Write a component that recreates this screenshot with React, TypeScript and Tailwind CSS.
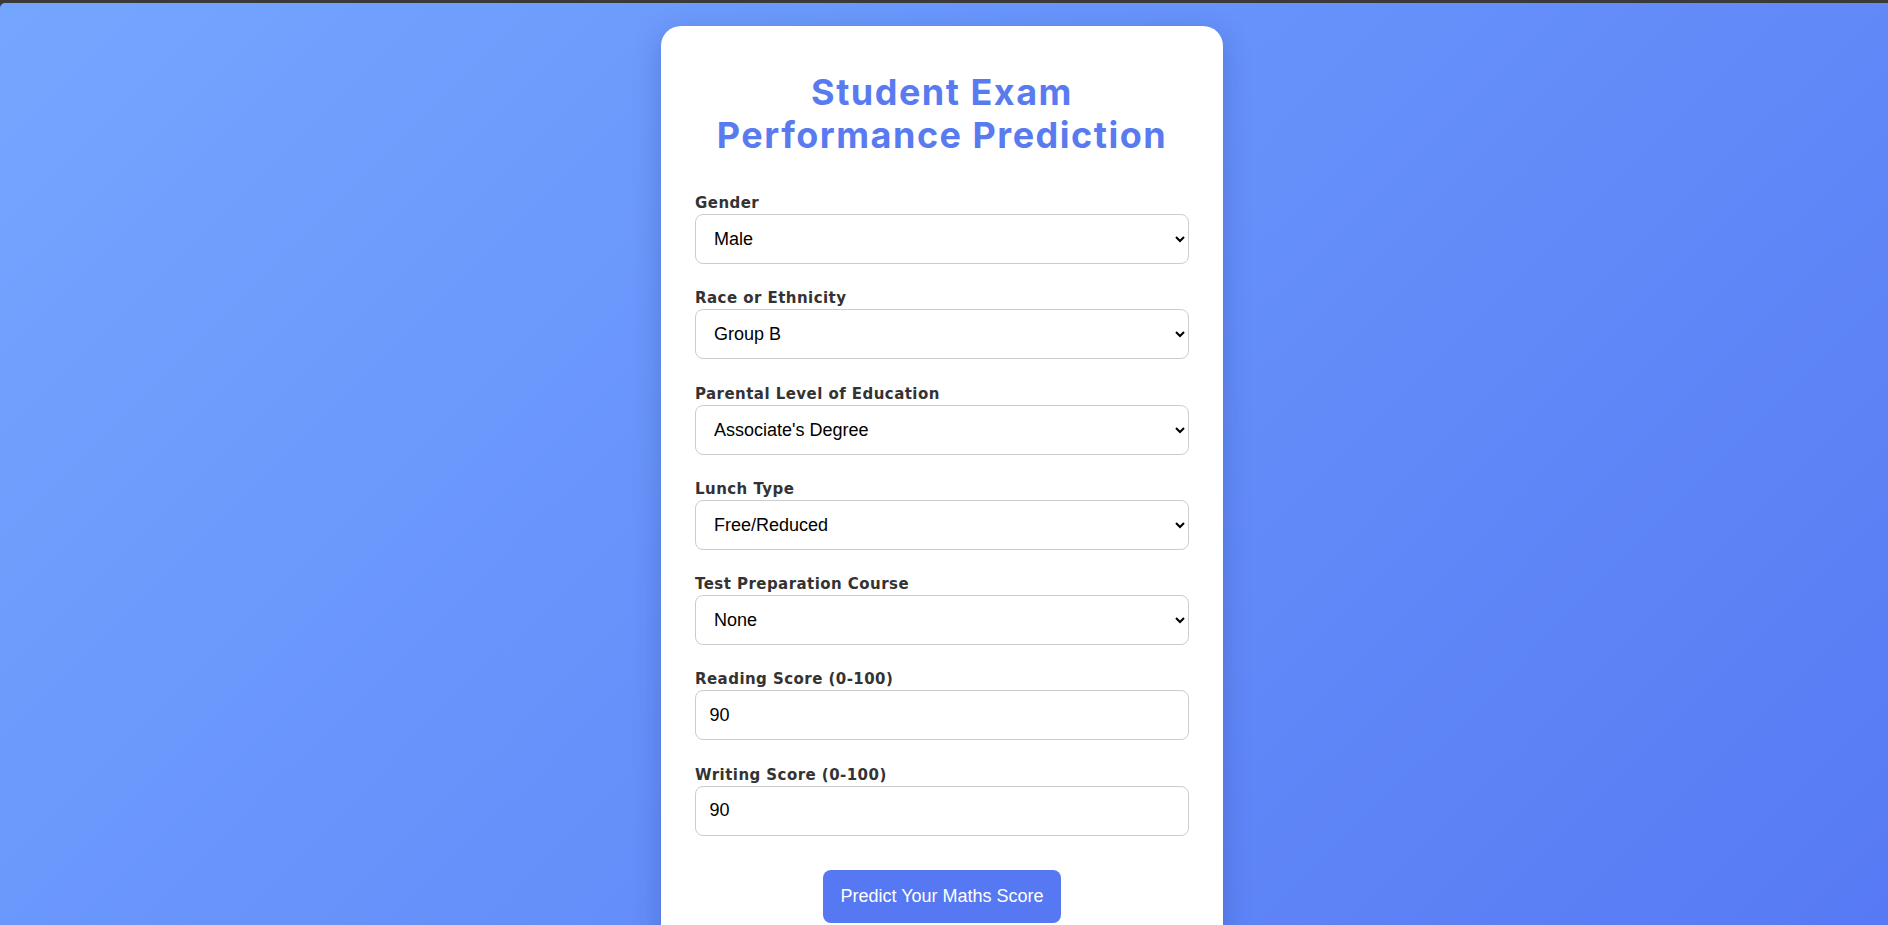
import React from "react";

const fields: { label: string; type: "select" | "input"; value: string }[] = [
  { label: "Gender", type: "select", value: "Male" },
  { label: "Race or Ethnicity", type: "select", value: "Group B" },
  { label: "Parental Level of Education", type: "select", value: "Associate's Degree" },
  { label: "Lunch Type", type: "select", value: "Free/Reduced" },
  { label: "Test Preparation Course", type: "select", value: "None" },
  { label: "Reading Score (0-100)", type: "input", value: "90" },
  { label: "Writing Score (0-100)", type: "input", value: "90" },
];

export default function App() {
  return (
    <div className="h-screen w-full overflow-hidden bg-[#3a3a3a] pt-[3px]">
      <div className="h-full w-full overflow-hidden rounded-tl-[5px] bg-[linear-gradient(135deg,#74a6ff_0%,#577af4_100%)] flex justify-center pr-[4px]">
        <div className="mt-[23px] w-[562px] shrink-0 self-start rounded-[20px] bg-white px-[34px] pt-[45px] pb-[40px] shadow-[0_8px_28px_rgba(20,40,120,0.25)]">
          <h1 className="text-center font-['Inter',sans-serif] text-[36px] font-bold leading-[43px] text-[#5a7bf0] tracking-[1.5px]">
            Student Exam
            <br />
            Performance Prediction
          </h1>
          <div className="mt-[35px] flex flex-col gap-[23.3px]">
            {fields.map((f) => (
              <div key={f.label} className="flex flex-col">
                <label className="h-[22px] font-['DejaVu_Sans',sans-serif] text-[15px] font-bold leading-[23px] tracking-[0.45px] text-[#333]">
                  {f.label}
                </label>
                {f.type === "select" ? (
                  <select
                    defaultValue={f.value}
                    className="h-[50px] w-full rounded-[8px] border border-[#ccc] bg-white px-[14px] font-['Liberation_Sans',Arial,sans-serif] text-[18px] text-black"
                  >
                    <option value={f.value}>{f.value}</option>
                  </select>
                ) : (
                  <input
                    defaultValue={f.value}
                    type="number"
                    className="h-[50px] w-full rounded-[8px] border border-[#ccc] bg-white px-[13.5px] font-['Liberation_Sans',Arial,sans-serif] text-[18px] text-black outline-none"
                  />
                )}
              </div>
            ))}
          </div>
          <div className="mt-[34px] flex justify-center">
            <button className="rounded-[8px] bg-[#5678f2] px-[17px] py-[16px] font-['Liberation_Sans',Arial,sans-serif] text-[18px] leading-[21px] text-white">
              Predict Your Maths Score
            </button>
          </div>
        </div>
      </div>
    </div>
  );
}
